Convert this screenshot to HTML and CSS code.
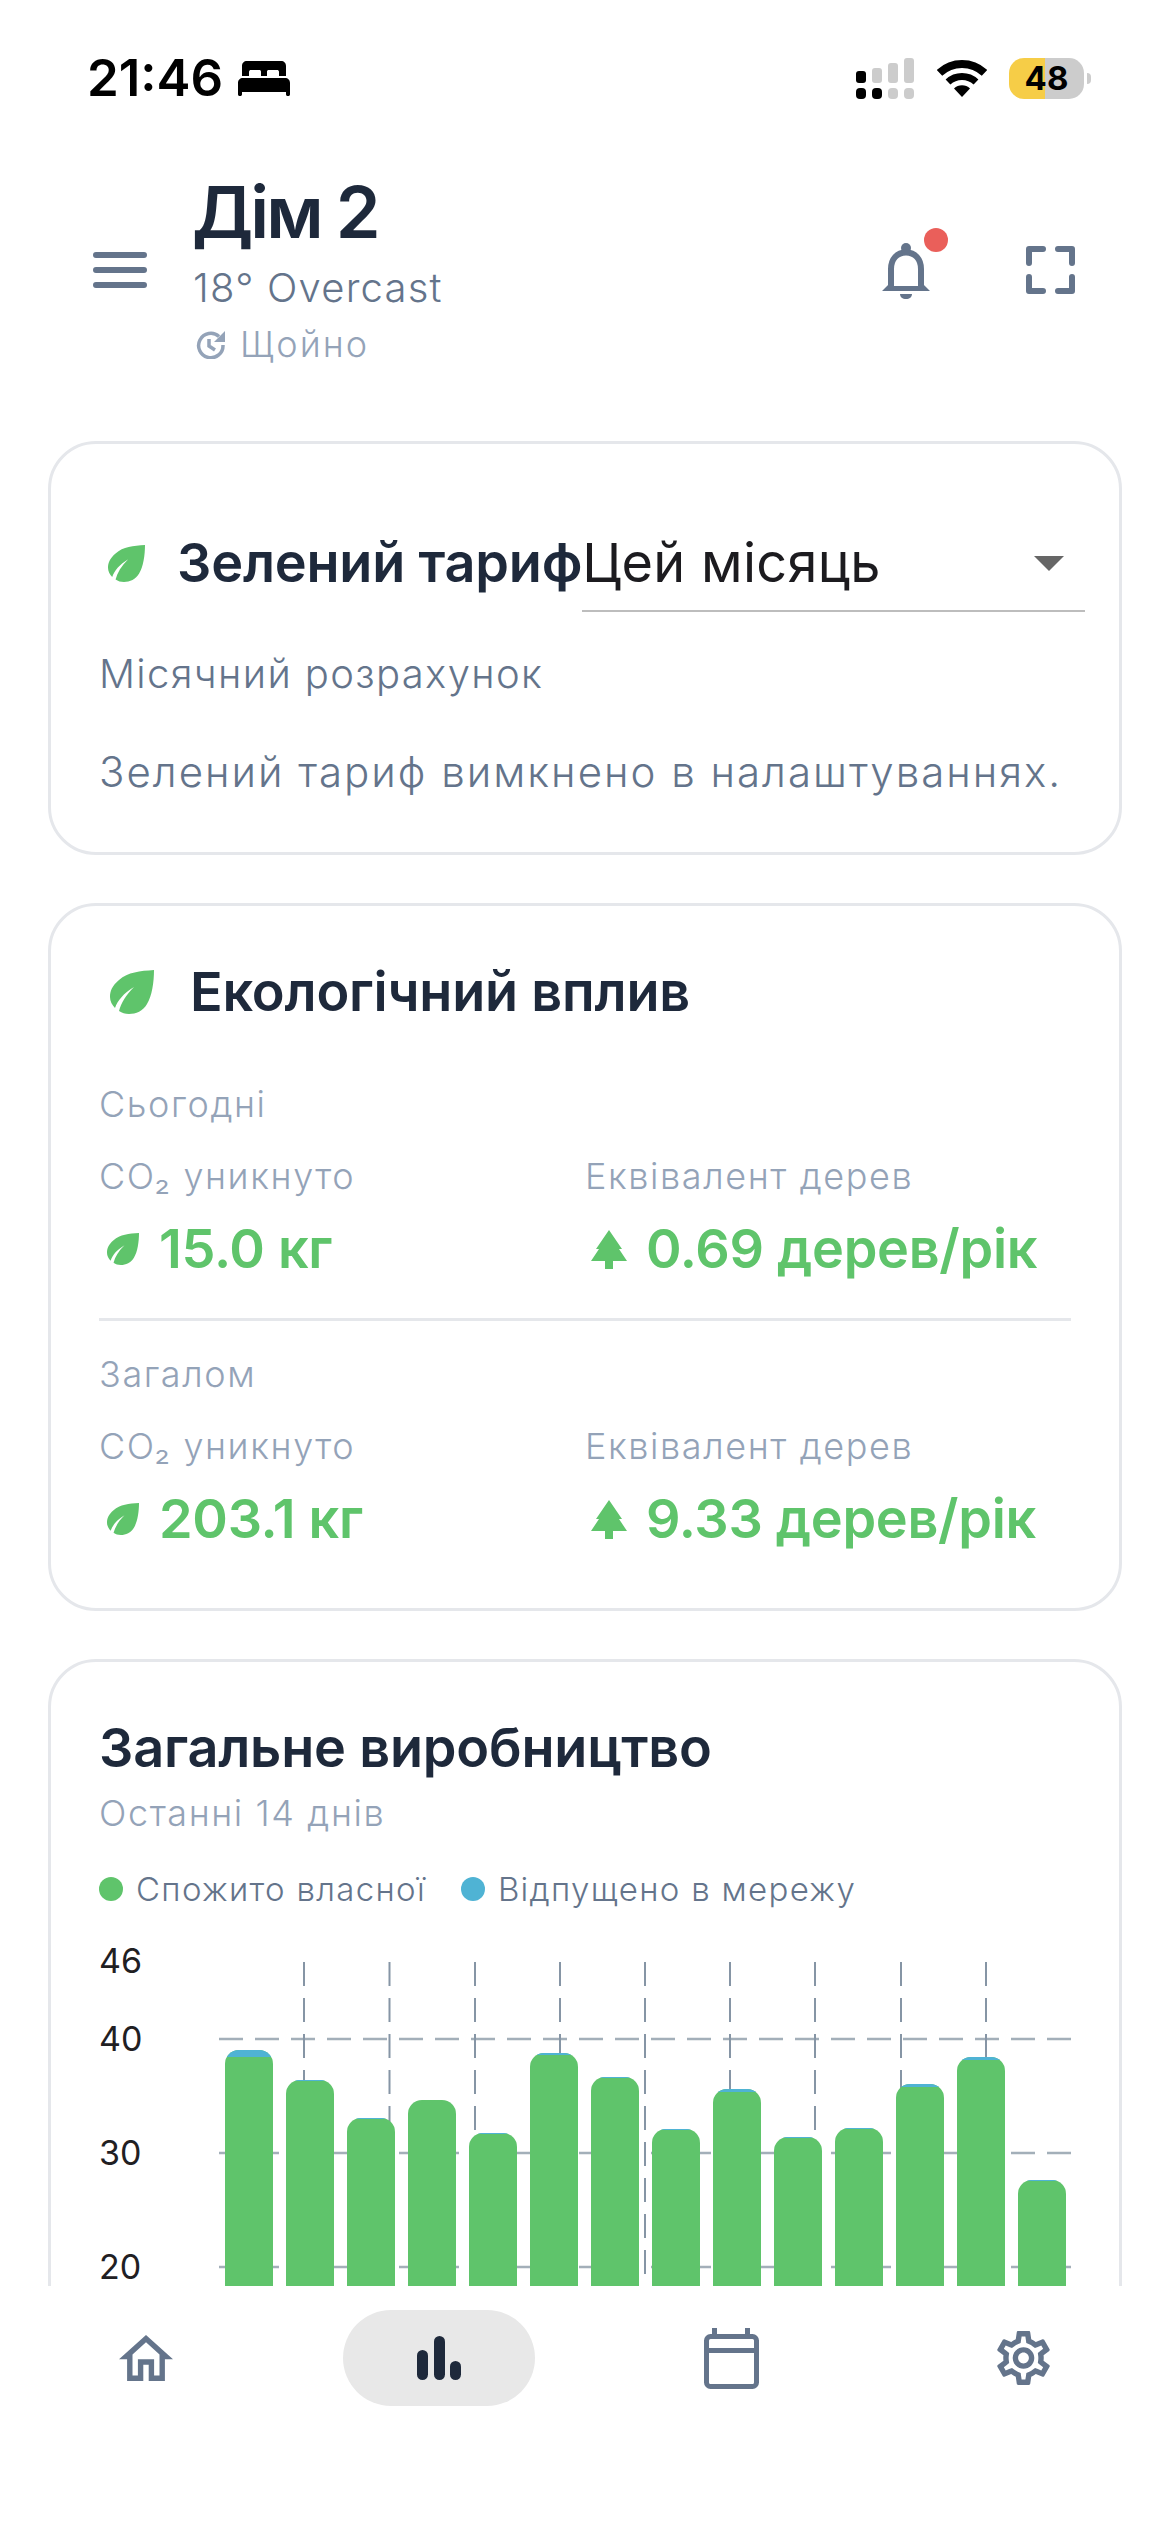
FILE: index.html
```html
<!DOCTYPE html>
<html lang="uk">

<head>
    <meta charset="UTF-8">
    <meta name="viewport" content="width=device-width, initial-scale=1.0">
    <title>Дім 2</title>
    <link rel="stylesheet" href="styles.css">
</head>

<body>
    <svg class="svg-defs" width="0" height="0">
        <symbol id="leaf" viewBox="0 0 44 44">
            <path d="M44 0C30 1 18 2 9 10C2 16 0 21 0 27C0 31 2 35 5 38C8 30 13 24 24 17C16 25 11 33 9 41C12 43 15 44 19 44C26 44 33 41 37 34C42 26 44 12 44 0Z" />
        </symbol>
        <symbol id="tree" viewBox="0 0 36 39">
            <path d="M18 0L31 19H28L36 31H22V39H14V31H0L8 19H5Z" />
        </symbol>
    </svg>

    <div class="status-bar">
        <div class="status-left">
            <span class="clock">21:46</span>
            <svg class="bed" viewBox="0 0 52 35">
                <path fill-rule="evenodd" d="M9 0H43C46 0 48 2 48 5V15H41V11C41 9.500 40 9 39 9H31C29.500 9 29 9.500 29 11V15H23V11C23 9.500 22.500 9 21 9H13C12 9 11 9.500 11 11V15H4V5C4 2 6 0 9 0ZM5 17H47C50 17 52 19 52 22V33C52 34.500 51.500 35 50 35C48.500 35 48 34.500 48 33V31H4V33C4 34.500 3.500 35 2 35C.5 35 0 34.500 0 33V22C0 19 2 17 5 17Z" />
            </svg>
        </div>
        <div class="status-right">
            <svg class="signal" viewBox="0 0 59 41">
                <rect class="on" x="0" y="13" width="10" height="12" rx="3" />
                <rect x="16" y="10" width="10" height="15" rx="3" />
                <rect x="32" y="5" width="10" height="20" rx="3" />
                <rect x="48" y="0" width="10" height="25" rx="3" />
                <rect class="on" x="0" y="30" width="10" height="11" rx="4" />
                <rect class="on" x="16" y="30" width="10" height="11" rx="4" />
                <rect x="32" y="30" width="10" height="11" rx="4" />
                <rect x="48" y="30" width="10" height="11" rx="4" />
            </svg>
            <svg class="wifi" viewBox="0 0 50 37">
                <path class="wifi-arc" stroke-width="8" d="M2.500 12.900A33 33 0 0 1 47.500 12.900" />
                <path class="wifi-arc" stroke-width="7" d="M11 22A20.500 20.500 0 0 1 39 22" />
                <path d="M25 37L17 28.500A11.500 11.500 0 0 1 33 28.500Z" />
            </svg>
            <div class="battery">
                <span class="battery-body">48</span>
                <span class="battery-nub"></span>
            </div>
        </div>
    </div>

    <header class="app-header">
        <svg class="menu-icon" viewBox="0 0 54 36">
            <path d="M3 3H51M3 18H51M3 33H51" />
        </svg>
        <div class="home-info">
            <h1 class="home-name">Дім 2</h1>
            <div class="home-weather">18° Overcast</div>
            <div class="home-updated">
                <svg class="updated-icon" viewBox="0 0 30 29">
                    <path class="updated-ring" d="M23 6.500A12.200 12.200 0 1 0 27 15" />
                    <path class="updated-hands" d="M13 9V16L19 20" />
                    <path class="updated-arrow" d="M29 1V12H18Z" />
                </svg>
                <span>Щойно</span>
            </div>
        </div>
        <div class="header-actions">
            <div class="bell-wrap">
                <svg class="bell-icon" viewBox="0 0 48 57">
                    <circle cx="24" cy="6" r="5" />
                    <path class="bell-line" d="M9 44V27C9 17 15 10.500 24 10.500C33 10.500 39 17 39 27V44" />
                    <path d="M0 49L9 40V44H39V40L48 49Z" />
                    <path d="M18 52H30C30 55 27.500 57 24 57C20.500 57 18 55 18 52Z" />
                </svg>
                <span class="bell-dot"></span>
            </div>
            <svg class="scan-icon" viewBox="0 0 49 48">
                <path d="M3 17V3H17M32 3H46V17M46 31V45H32M17 45H3V31" />
            </svg>
        </div>
    </header>

    <main class="content">
        <section class="card tariff-card">
            <div class="tariff-head">
                <div class="tariff-title">
                    <svg class="leaf leaf-md">
                        <use href="#leaf" />
                    </svg>
                    <h2 class="card-title">Зелений тариф</h2>
                </div>
                <div class="period-select">
                    <span>Цей місяць</span>
                    <span class="select-arrow"></span>
                </div>
            </div>
            <div class="tariff-label">Місячний розрахунок</div>
            <p class="tariff-note">Зелений тариф вимкнено в налаштуваннях.</p>
        </section>

        <section class="card eco-card">
            <div class="eco-head">
                <svg class="leaf leaf-lg">
                    <use href="#leaf" />
                </svg>
                <h2 class="card-title">Екологічний вплив</h2>
            </div>

            <div class="period first">Сьогодні</div>
            <div class="stats">
                <div>
                    <div class="stat-label">CO₂ уникнуто</div>
                    <div class="stat-value">
                        <svg class="leaf leaf-sm">
                            <use href="#leaf" />
                        </svg>
                        <span>15.0 кг</span>
                    </div>
                </div>
                <div>
                    <div class="stat-label">Еквівалент дерев</div>
                    <div class="stat-value">
                        <svg class="tree">
                            <use href="#tree" />
                        </svg>
                        <span>0.69 дерев/рік</span>
                    </div>
                </div>
            </div>

            <div class="eco-divider"></div>

            <div class="period">Загалом</div>
            <div class="stats">
                <div>
                    <div class="stat-label">CO₂ уникнуто</div>
                    <div class="stat-value">
                        <svg class="leaf leaf-sm">
                            <use href="#leaf" />
                        </svg>
                        <span>203.1 кг</span>
                    </div>
                </div>
                <div>
                    <div class="stat-label">Еквівалент дерев</div>
                    <div class="stat-value">
                        <svg class="tree">
                            <use href="#tree" />
                        </svg>
                        <span>9.33 дерев/рік</span>
                    </div>
                </div>
            </div>
        </section>

        <section class="card">
            <h2 class="card-title">Загальне виробництво</h2>
            <div class="chart-sub">Останні 14 днів</div>
            <div class="legend">
                <span class="legend-item"><i class="legend-dot green"></i>Спожито власної</span>
                <span class="legend-item"><i class="legend-dot blue"></i>Відпущено в мережу</span>
            </div>

            <div class="chart">
                <span class="y-label y-46">46</span>
                <span class="y-label y-40">40</span>
                <span class="y-label y-30">30</span>
                <span class="y-label y-20">20</span>

                <svg class="chart-grid" viewBox="0 0 972 370">
                    <path class="grid-h" d="M120 109H972M120 223H972M120 337H972" />
                    <path class="grid-v" d="M205 32V370M290.500 32V370M376 32V370M461 32V370M546 32V370M631 32V370M716 32V370M802 32V370M887 32V370" />
                </svg>

                <div class="bars">
                    <div class="bar" style="height: 250px"><div class="bar-top" style="height: 7px"></div></div>
                    <div class="bar" style="height: 220px"><div class="bar-top" style="height: 1px"></div></div>
                    <div class="bar" style="height: 182px"><div class="bar-top" style="height: 1px"></div></div>
                    <div class="bar" style="height: 200px"></div>
                    <div class="bar" style="height: 167px"><div class="bar-top" style="height: 1px"></div></div>
                    <div class="bar" style="height: 247px"><div class="bar-top" style="height: 2px"></div></div>
                    <div class="bar" style="height: 223px"><div class="bar-top" style="height: 1px"></div></div>
                    <div class="bar" style="height: 171px"><div class="bar-top" style="height: 1px"></div></div>
                    <div class="bar" style="height: 211px"><div class="bar-top" style="height: 3px"></div></div>
                    <div class="bar" style="height: 163px"><div class="bar-top" style="height: 1px"></div></div>
                    <div class="bar" style="height: 172px"><div class="bar-top" style="height: 1px"></div></div>
                    <div class="bar" style="height: 216px"><div class="bar-top" style="height: 3px"></div></div>
                    <div class="bar" style="height: 243px"><div class="bar-top" style="height: 3px"></div></div>
                    <div class="bar" style="height: 120px"><div class="bar-top" style="height: 1px"></div></div>
                </div>
            </div>
        </section>
    </main>

    <nav class="tab-bar">
        <div class="tab">
            <svg class="tab-home" viewBox="2 3 20 17">
                <path d="M12 5.690l5 4.500V18h-2v-6H9v6H7v-7.810l5-4.500M12 3L2 12h3v8h6v-6h2v6h6v-8h3L12 3z" />
            </svg>
        </div>
        <div class="tab">
            <div class="tab-pill">
                <svg class="tab-chart" viewBox="0 0 44 44">
                    <rect x="0" y="14" width="11" height="30" rx="5.500" />
                    <rect x="17" y="0" width="11" height="44" rx="5.500" />
                    <rect x="33" y="25" width="11" height="19" rx="5.500" />
                </svg>
            </div>
        </div>
        <div class="tab">
            <svg class="tab-calendar" viewBox="0 0 55 61">
                <path d="M10.500 0V6M43.500 0V6" />
                <rect x="2.500" y="8.500" width="50" height="50" rx="4" />
                <path d="M2.500 22.500H52.500" />
            </svg>
        </div>
        <div class="tab">
            <svg class="tab-gear" viewBox="2.300 2 19.400 20">
                <path d="M19.430 12.980c.04-.32.07-.64.07-.98 0-.34-.03-.66-.07-.98l2.110-1.650c.19-.15.24-.42.12-.64l-2-3.460c-.09-.16-.26-.25-.44-.25-.06 0-.12.01-.17.03l-2.490 1c-.52-.4-1.080-.73-1.690-.98l-.38-2.650C14.460 2.180 14.250 2 14 2h-4c-.25 0-.46.18-.49.42l-.38 2.650c-.61.25-1.170.59-1.690.98l-2.490-1c-.06-.02-.12-.03-.18-.03-.17 0-.34.09-.43.25l-2 3.460c-.13.22-.07.49.12.64l2.110 1.650c-.04.32-.07.65-.07.98 0 .33.03.66.07.98l-2.110 1.650c-.19.15-.24.42-.12.64l2 3.460c.09.16.26.25.44.25.06 0 .12-.01.17-.03l2.490-1c.52.4 1.080.73 1.690.98l.38 2.650c.03.24.24.42.49.42h4c.25 0 .46-.18.49-.42l.38-2.650c.61-.25 1.170-.59 1.690-.98l2.490 1c.06.02.12.03.18.03.17 0 .34-.09.43-.25l2-3.460c.12-.22.07-.49-.12-.64l-2.110-1.650zm-1.980-1.710c.04.31.05.52.05.73 0 .21-.02.43-.05.73l-.14 1.130.89.7 1.080.84-.7 1.210-1.270-.51-1.040-.42-.9.68c-.43.32-.84.56-1.250.73l-1.060.43-.16 1.130-.2 1.350h-1.400l-.19-1.350-.16-1.130-1.060-.43c-.43-.18-.83-.41-1.230-.71l-.91-.7-1.060.43-1.270.51-.7-1.210 1.080-.84.89-.7-.14-1.130c-.03-.31-.05-.54-.05-.74s.02-.43.05-.73l.14-1.130-.89-.7-1.080-.84.7-1.210 1.270.51 1.040.42.9-.68c.43-.32.84-.56 1.250-.73l1.060-.43.16-1.130.2-1.350h1.390l.19 1.350.16 1.130 1.060.43c.43.18.83.41 1.230.71l.91.7 1.060-.43 1.270-.51.7 1.210-1.070.85-.89.7.14 1.130zM12 8c-2.210 0-4 1.790-4 4s1.790 4 4 4 4-1.790 4-4-1.790-4-4-4zm0 6c-1.100 0-2-.9-2-2s.9-2 2-2 2 .9 2 2-.9 2-2 2z" />
            </svg>
        </div>
    </nav>
</body>

</html>
```

FILE: styles.css
```css
* {
    box-sizing: border-box;
}

body {
    display: flex;
    flex-direction: column;
    width: 1170px;
    height: 2532px;
    margin: 0;
    overflow: hidden;
    background: white;
    font-family: "Inter", "Noto Sans", sans-serif;
    color: #1e293b;
}

h1,
h2,
p {
    margin: 0;
}

.svg-defs {
    position: absolute;
}

/* status bar */
.status-bar {
    display: flex;
    justify-content: space-between;
    align-items: center;
    height: 156px;
    padding: 0 79px 0 87px;
    flex-shrink: 0;
}

.status-left {
    display: flex;
    align-items: center;
    gap: 15px;
}

.clock {
    font-size: 51px;
    font-weight: 600;
    line-height: 60px;
    color: black;
}

.bed {
    width: 52px;
    height: 35px;
    fill: black;
}

.status-right {
    display: flex;
    align-items: center;
}

.signal {
    width: 59px;
    height: 41px;
    margin-right: 22px;
    fill: #cccccc;
}

.signal .on {
    fill: black;
}

.wifi {
    width: 50px;
    height: 37px;
    margin-right: 22px;
    fill: black;
}

.wifi-arc {
    fill: none;
    stroke: black;
}

.battery {
    display: flex;
    align-items: center;
    gap: 3px;
}

.battery-body {
    width: 75px;
    height: 41px;
    border-radius: 15px;
    background: linear-gradient(90deg, #f6cd47 48%, #cccccc 48%);
    font-size: 33px;
    font-weight: 700;
    line-height: 41px;
    text-align: center;
    color: black;
}

.battery-nub {
    width: 4px;
    height: 11px;
    border-radius: 0 4px 4px 0;
    background: #cccccc;
}

/* header */
.app-header {
    display: flex;
    align-items: center;
    margin-top: 16px;
    padding: 0 95px 0 93px;
    flex-shrink: 0;
}

.menu-icon {
    width: 54px;
    height: 36px;
    margin-right: 45px;
    fill: none;
    stroke: #64748b;
    stroke-width: 6;
    stroke-linecap: round;
}

.home-name {
    font-size: 72px;
    font-weight: 600;
    line-height: 80px;
    letter-spacing: -3px;
}

.home-weather {
    margin-top: 8px;
    padding-left: 1px;
    font-size: 40px;
    font-weight: 350;
    line-height: 56px;
    letter-spacing: 1.200px;
    color: #64748b;
}

.home-updated {
    display: flex;
    align-items: center;
    gap: 14px;
    margin-top: 4px;
    padding-left: 4px;
    font-size: 36px;
    font-weight: 350;
    line-height: 48px;
    letter-spacing: 2px;
    color: #94a3b8;
}

.updated-icon {
    width: 30px;
    height: 29px;
}

.updated-ring,
.updated-hands {
    fill: none;
    stroke: #94a3b8;
    stroke-width: 3.5;
}

.updated-arrow {
    fill: #94a3b8;
}

.header-actions {
    display: flex;
    align-items: center;
    gap: 96px;
    margin-left: auto;
}

.bell-wrap {
    position: relative;
    width: 48px;
    height: 57px;
}

.bell-icon {
    display: block;
    width: 48px;
    height: 57px;
    fill: #64748b;
}

.bell-line {
    fill: none;
    stroke: #64748b;
    stroke-width: 6;
}

.bell-dot {
    position: absolute;
    top: -14px;
    right: -18px;
    width: 24px;
    height: 24px;
    border-radius: 50%;
    background: #ea5f5a;
}

.scan-icon {
    width: 49px;
    height: 48px;
    fill: none;
    stroke: #64748b;
    stroke-width: 6;
    stroke-linecap: round;
    stroke-linejoin: round;
}

/* cards */
.content {
    flex: 1;
    min-height: 0;
    overflow: hidden;
    padding: 73px 48px 0;
}

.card {
    margin-bottom: 48px;
    padding: 48px;
    border: 3px solid #e5e7eb;
    border-radius: 48px;
    background: white;
}

.card-title {
    font-size: 54px;
    font-weight: 600;
    line-height: 76px;
    letter-spacing: -.2px;
    white-space: nowrap;
}

.leaf {
    flex-shrink: 0;
    fill: #5fc46b;
}

/* green tariff */
.tariff-card {
    padding-bottom: 50px;
}

.tariff-head {
    display: flex;
    justify-content: space-between;
}

.tariff-title {
    display: flex;
    align-items: center;
    height: 64px;
    margin-top: 39px;
}

.leaf-md {
    width: 37px;
    height: 37px;
    margin: 0 32px 0 9px;
}

.period-select {
    display: flex;
    align-items: center;
    justify-content: space-between;
    flex-shrink: 0;
    width: 503px;
    height: 120px;
    margin-right: -11px;
    padding: 39px 21px 15px 0;
    border-bottom: 2px solid #bdbdbd;
    font-size: 54px;
    line-height: 64px;
    letter-spacing: .3px;
    color: #1c1b1f;
}

.select-arrow {
    width: 0;
    height: 0;
    border-top: 15px solid #666666;
    border-left: 15.5px solid transparent;
    border-right: 15.5px solid transparent;
}

.tariff-label {
    margin-top: 34px;
    font-size: 40px;
    font-weight: 350;
    line-height: 56px;
    letter-spacing: 1.350px;
    color: #64748b;
}

.tariff-note {
    margin-top: 40px;
    font-size: 42px;
    font-weight: 350;
    line-height: 60px;
    letter-spacing: 2px;
    color: #64748b;
}

/* eco impact */
.eco-card {
    padding-bottom: 51px;
}

.eco-head {
    display: flex;
    align-items: center;
    gap: 36px;
}

.leaf-lg {
    width: 44px;
    height: 44px;
    margin-left: 11px;
}

.period {
    margin-top: 29px;
    font-size: 36px;
    font-weight: 350;
    line-height: 48px;
    letter-spacing: 1.600px;
    color: #94a3b8;
}

.period.first {
    margin-top: 50px;
}

.stats {
    display: grid;
    grid-template-columns: 1fr 1fr;
    margin-top: 24px;
}

.stat-label {
    font-size: 36px;
    font-weight: 350;
    line-height: 48px;
    letter-spacing: 1.600px;
    color: #94a3b8;
}

.stat-value {
    display: flex;
    align-items: center;
    margin-top: 11px;
    font-size: 54px;
    font-weight: 600;
    line-height: 76px;
    letter-spacing: -.3px;
    color: #5fc46b;
    white-space: nowrap;
}

.leaf-sm {
    width: 32px;
    height: 32px;
    margin: 0 20px 0 8px;
}

.tree {
    flex-shrink: 0;
    width: 36px;
    height: 39px;
    margin: 0 19px 0 6px;
    fill: #5fc46b;
}

.eco-divider {
    height: 3px;
    margin-top: 31px;
    background: #e5e7eb;
}

/* production chart */
.chart-sub {
    margin-top: 3px;
    font-size: 36px;
    font-weight: 350;
    line-height: 48px;
    letter-spacing: 1.600px;
    color: #94a3b8;
}

.legend {
    display: flex;
    gap: 35px;
    margin-top: 30px;
    font-size: 33px;
    font-weight: 350;
    line-height: 44px;
    letter-spacing: 1.300px;
    color: #64748b;
}

.legend-item {
    display: flex;
    align-items: center;
    gap: 13px;
}

.legend-dot {
    width: 24px;
    height: 24px;
    border-radius: 50%;
}

.legend-dot.green {
    background: #5fc46b;
}

.legend-dot.blue {
    background: #4fb3d4;
}

/* chart canvas: labels and gridlines sit at their value */
.chart {
    position: relative;
    height: 370px;
    margin-top: 19px;
}

.y-label {
    position: absolute;
    left: 0;
    font-size: 34px;
    line-height: 40px;
    color: #1f2023;
}

.y-46 {
    top: 11px;
}

.y-40 {
    top: 89px;
}

.y-30 {
    top: 203px;
}

.y-20 {
    top: 317px;
}

.chart-grid {
    position: absolute;
    top: 0;
    left: 0;
    width: 972px;
    height: 370px;
    fill: none;
}

.grid-h {
    stroke: #a3afb9;
    stroke-width: 2.500;
    stroke-dasharray: 24 12;
}

.grid-v {
    stroke: #8695a5;
    stroke-width: 2;
    stroke-dasharray: 24 12;
}

.bars {
    position: relative;
    display: flex;
    align-items: flex-end;
    gap: 13px;
    height: 370px;
    padding-left: 126px;
}

.bar {
    width: 48px;
    overflow: hidden;
    border-radius: 14px 14px 0 0;
    background: #5fc46b;
}

.bar-top {
    background: #4fb3d4;
}

/* bottom tabs */
.tab-bar {
    display: flex;
    align-items: flex-start;
    height: 246px;
    padding-top: 24px;
    background: white;
    flex-shrink: 0;
}

.tab {
    display: flex;
    align-items: center;
    justify-content: center;
    flex: 1;
    height: 96px;
}

.tab-pill {
    display: flex;
    align-items: center;
    justify-content: center;
    width: 192px;
    height: 96px;
    border-radius: 48px;
    background: #e8e8e8;
}

.tab-home {
    width: 54px;
    height: 46px;
    fill: #64748b;
}

.tab-chart {
    width: 44px;
    height: 44px;
    fill: #1e293b;
}

.tab-calendar {
    width: 55px;
    height: 61px;
    fill: none;
    stroke: #64748b;
    stroke-width: 5;
}

.tab-gear {
    width: 53px;
    height: 54px;
    fill: #64748b;
}
```
